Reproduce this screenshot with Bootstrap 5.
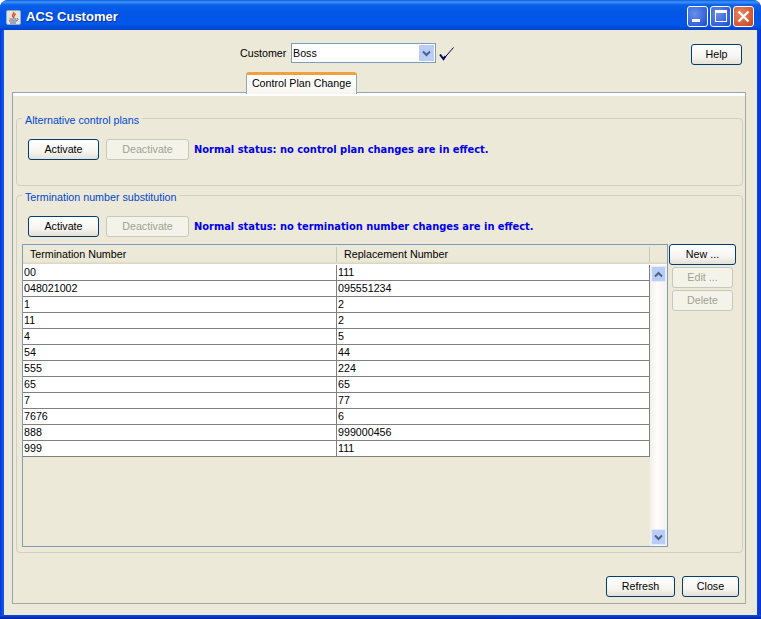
<!DOCTYPE html>
<html lang="en">
<head>
<meta charset="utf-8">
<title>ACS Customer</title>
<link href="https://cdn.jsdelivr.net/npm/bootstrap@5.3.0/dist/css/bootstrap.min.css" rel="stylesheet">
<style>
html,body{margin:0;height:619px;width:761px;overflow:hidden;background:#fff;}
body{font-family:"Liberation Sans",sans-serif;font-size:10.7px;line-height:14px;color:#000;}
.xp-win{width:761px;height:619px;border-radius:8px 8px 0 0;overflow:hidden;background:linear-gradient(90deg,#0831d9 0,#0a5ae8 3px,#0a5ae8 99%,#0831d9 100%);padding:0 4px 4px 4px;position:relative;}
.xp-win-bottom{position:absolute;left:0;right:0;bottom:0;height:4px;background:linear-gradient(#0a4fe0,#001ea0);}
.xp-title{height:30px;margin:0 -4px;padding:3px 7px 0 6px;background:linear-gradient(#0a5ce0 0,#3f93f8 2px,#0a5fe8 5px,#0055e5 14px,#0258ea 24px,#0047d4 29px,#0040c8 30px);color:#fff;}
.xp-title-text{font-family:"Liberation Sans",sans-serif;font-weight:700;font-size:13px;margin:1px 0 0 5px;text-shadow:1px 1px 0 #0a2f98;}
.xp-ico{width:15px;height:15px;margin-top:1px;}
.xp-ctl{width:21px;height:21px;margin-left:2px;border:1px solid #fff;border-radius:3px;background:radial-gradient(circle at 35% 35%,#6a8fe8,#2f5cd8 75%,#1f49c0);}
.xp-ctl-close{background:radial-gradient(circle at 35% 35%,#e88860,#d5512c 75%,#b83c18);}
.xp-client{background:#ece9d8;height:585px;position:relative;}
.xp-top{height:62px;padding:13px 15px 0 236px;}
.xp-cust{margin-top:3px;width:45px;white-space:nowrap;}
.xp-combo{width:145px;height:20px;background:#fff;border:1px solid #7f9db9;padding:0 1px 0 1px;margin-left:6px;}
.xp-arrow{width:15px;height:16px;margin:1px 0;background:#b9cdf6;border-radius:1px;}
.xp-check{margin:4px 0 0 3px;}
.xp-help{margin-top:1px;}
.xp-btn{font-size:10.7px;line-height:14px;padding:0 0 1px;color:#000;height:21px;border:1px solid #003c74;border-radius:3px;background:linear-gradient(#fff,#f6f5f0 60%,#e4e2d6);}
.xp-btn:disabled,.xp-btn.disabled{opacity:1;color:#a1a192;border-color:#c9c7ba;background:#f4f3ea;}
.xp-w51{width:51px;}.xp-w71{width:71px;}.xp-w83{width:83px;margin-left:7px;}.xp-w67{width:67px;}.xp-w61{width:61px;margin-top:2px;}.xp-w69{width:69px;}.xp-w57{width:57px;}
.xp-tabrow{height:0;position:relative;}
.xp-tab{position:absolute;left:242px;top:-20px;width:111px;height:22px;border:1px solid #91a7b4;border-bottom:0;border-top:3px solid #f0a040;border-radius:3px 3px 0 0;text-align:center;padding-top:1px;background:linear-gradient(#fff,#f7f6f0);z-index:2;}
.xp-panel{margin:0 11px 0 8px;height:512px;border:1px solid #91a7b4;border-right-color:#a6a8a4;border-bottom-color:#a6a8a4;position:relative;padding:25px 2px 0 3px;}
.xp-panel::before{content:"";position:absolute;left:0;right:0;top:0;height:3px;background:#fff;}
.xp-group{border:1px solid #d0d0bf;border-radius:4px;position:relative;}
.xp-g1{height:68px;padding:20px 11px 0 11px;}
.xp-g2{height:358px;margin-top:9px;padding:20px 5px 0 5px;}
.xp-legend{position:absolute;left:5px;top:-6px;padding:0 3px;background:#ece9d8;color:#0046d5;}
.xp-status{color:#0000ee;font-weight:700;margin-left:5px;font-family:"DejaVu Sans",sans-serif;font-size:9.9px;}
.xp-acts{margin-left:6px;}
.xp-table-wrap{width:646px;height:303px;margin-top:7px;border:1px solid #7f9db9;background:#ece9d8;}
.xp-head{height:20px;display:flex;background:linear-gradient(#ece9d8 0,#ece9d8 85%,#d8d4c0 100%);border-bottom:1px solid #fff;}
.xp-hc{width:314px;padding:2px 0 0 7px;position:relative;}
.xp-hc::after{content:"";position:absolute;right:0;top:2px;bottom:2px;width:1px;background:#cac7b8;}
.xp-hc2{width:313px;}
.xp-body{flex:1;min-width:0;}
.xp-row{height:16px;display:flex;border-bottom:1px solid #808080;background:#fff;width:627px;}
.xp-c{width:314px;border-right:1px solid #808080;line-height:15px;padding-left:1px;}
.xp-c2{width:313px;}
.xp-scroll{width:17px;background:linear-gradient(90deg,#f3f1ea,#fdfdfb 40%,#f3f1ea);padding:1px 1px;}
.xp-sbtn{width:15px;height:16px;background:#b9cdf6;border:1px solid #e4ecfc;border-radius:1px;}
.xp-side{margin:7px 0 0 1px;width:67px;}
.xp-foot{height:21px;margin:23px 4px 0 0;gap:7px;}
</style>
</head>
<body>
<div class="xp-win">
  <div class="xp-win-bottom"></div>
  <div class="xp-title d-flex align-items-center">
    <svg class="xp-ico" viewBox="0 0 15 15"><rect x=".5" y=".5" width="14" height="14" rx="1.5" fill="#e6e4dc" stroke="#9aa8c8"/><path d="M7.5 2C9 3.5 6 4.5 6.5 6c.3 1 1.5 1.2 1.5 2M9.5 3.5C9 5 8 5 8.5 6.5" fill="none" stroke="#d8481c" stroke-width="1.3"/><path d="M3.5 9h7M3 11h8M4 13h6" stroke="#5a6a90" stroke-width="1"/><path d="M11 8.5c1.5 0 1.5 2-.5 2" fill="none" stroke="#5a6a90"/></svg>
    <span class="xp-title-text">ACS Customer</span>
    <span class="ms-auto d-flex">
      <span class="xp-ctl d-flex"><svg width="19" height="19" viewBox="0 0 19 19"><rect x="4" y="12" width="8" height="3" fill="#fff"/></svg></span>
      <span class="xp-ctl d-flex"><svg width="19" height="19" viewBox="0 0 19 19"><rect x="4.5" y="3.5" width="11" height="11" fill="none" stroke="#fff"/><rect x="4" y="3" width="12" height="3" fill="#fff"/></svg></span>
      <span class="xp-ctl xp-ctl-close d-flex"><svg width="19" height="19" viewBox="0 0 19 19"><path d="M4.5 4.5l10 10M14.5 4.5l-10 10" stroke="#fff" stroke-width="2.4"/></svg></span>
    </span>
  </div>
  <div class="xp-client">
    <div class="xp-top d-flex align-items-start">
      <span class="xp-cust">Customer</span>
      <div class="xp-combo d-flex align-items-center justify-content-between">
        <span>Boss</span>
        <span class="xp-arrow d-flex align-items-center justify-content-center"><svg width="9" height="7" viewBox="0 0 9 7"><path d="M1 1.5l3.5 3.5 3.5-3.5" fill="none" stroke="#4d6185" stroke-width="2"/></svg></span>
      </div>
      <svg class="xp-check" width="15" height="14" viewBox="0 0 15 14"><path d="M4.5 12 14.5 .5" fill="none" stroke="#000060" stroke-width="1"/><path d="M1 7.5l3.5 4.5 2-3" fill="none" stroke="#000060" stroke-width="2"/></svg>
      <button type="button" class="btn xp-btn xp-w51 ms-auto xp-help">Help</button>
    </div>
    <div class="xp-tabrow"><div class="xp-tab">Control Plan Change</div></div>
    <div class="xp-panel">
      <div class="xp-group xp-g1">
        <span class="xp-legend">Alternative control plans</span>
        <div class="d-flex align-items-center">
          <button type="button" class="btn xp-btn xp-w71">Activate</button>
          <button type="button" class="btn xp-btn xp-w83" disabled>Deactivate</button>
          <span class="xp-status">Normal status: no control plan changes are in effect.</span>
        </div>
      </div>
      <div class="xp-group xp-g2">
        <span class="xp-legend">Termination number substitution</span>
        <div class="d-flex align-items-center xp-acts">
          <button type="button" class="btn xp-btn xp-w71">Activate</button>
          <button type="button" class="btn xp-btn xp-w83" disabled>Deactivate</button>
          <span class="xp-status">Normal status: no termination number changes are in effect.</span>
        </div>
        <div class="d-flex align-items-start">
          <div class="xp-table-wrap d-flex flex-column">
            <div class="xp-head"><div class="xp-hc">Termination Number</div><div class="xp-hc xp-hc2">Replacement Number</div></div>
            <div class="d-flex xp-body">
              <div class="flex-grow-1">
                <div class="xp-row"><div class="xp-c">00</div><div class="xp-c xp-c2">111</div></div>
                <div class="xp-row"><div class="xp-c">048021002</div><div class="xp-c xp-c2">095551234</div></div>
                <div class="xp-row"><div class="xp-c">1</div><div class="xp-c xp-c2">2</div></div>
                <div class="xp-row"><div class="xp-c">11</div><div class="xp-c xp-c2">2</div></div>
                <div class="xp-row"><div class="xp-c">4</div><div class="xp-c xp-c2">5</div></div>
                <div class="xp-row"><div class="xp-c">54</div><div class="xp-c xp-c2">44</div></div>
                <div class="xp-row"><div class="xp-c">555</div><div class="xp-c xp-c2">224</div></div>
                <div class="xp-row"><div class="xp-c">65</div><div class="xp-c xp-c2">65</div></div>
                <div class="xp-row"><div class="xp-c">7</div><div class="xp-c xp-c2">77</div></div>
                <div class="xp-row"><div class="xp-c">7676</div><div class="xp-c xp-c2">6</div></div>
                <div class="xp-row"><div class="xp-c">888</div><div class="xp-c xp-c2">999000456</div></div>
                <div class="xp-row"><div class="xp-c">999</div><div class="xp-c xp-c2">111</div></div>
              </div>
              <div class="xp-scroll d-flex flex-column justify-content-between">
                <span class="xp-sbtn d-flex align-items-center justify-content-center"><svg width="9" height="7" viewBox="0 0 9 7"><path d="M1 5.5l3.5-3.5 3.5 3.5" fill="none" stroke="#4d6185" stroke-width="2"/></svg></span>
                <span class="xp-sbtn d-flex align-items-center justify-content-center"><svg width="9" height="7" viewBox="0 0 9 7"><path d="M1 1.5l3.5 3.5 3.5-3.5" fill="none" stroke="#4d6185" stroke-width="2"/></svg></span>
              </div>
            </div>
          </div>
          <div class="xp-side d-flex flex-column align-items-center">
            <button type="button" class="btn xp-btn xp-w67">New ...</button>
            <button type="button" class="btn xp-btn xp-w61" disabled>Edit ...</button>
            <button type="button" class="btn xp-btn xp-w61" disabled>Delete</button>
          </div>
        </div>
      </div>
      <div class="xp-foot d-flex justify-content-end">
        <button type="button" class="btn xp-btn xp-w69">Refresh</button>
        <button type="button" class="btn xp-btn xp-w57">Close</button>
      </div>
    </div>
  </div>
</div>
</body>
</html>
